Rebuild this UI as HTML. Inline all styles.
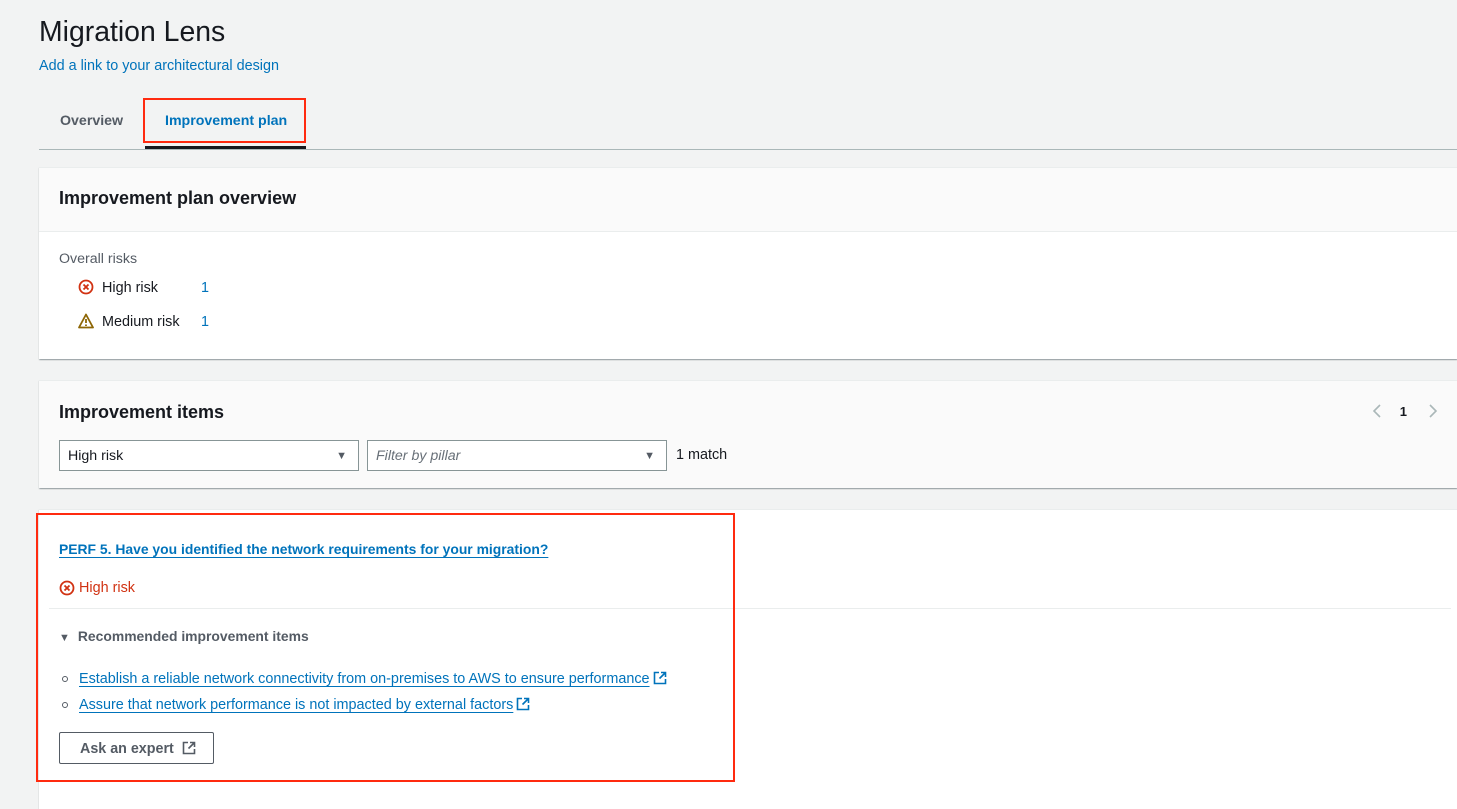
<!DOCTYPE html>
<html><head><meta charset="utf-8"><style>
*{box-sizing:border-box;margin:0;padding:0}
body{width:1457px;height:793px;overflow:hidden;background:#f2f3f3;font-family:"Liberation Sans",sans-serif;color:#16191f;position:relative}
.a{position:absolute}
.link{color:#0073bb}
.card{position:absolute;left:39px;right:0;box-shadow:0 1px 1px rgba(0,28,36,.3),1px 1px 1px rgba(0,28,36,.15);border-top:1px solid #eaeded}
.ul{text-decoration:underline;text-underline-offset:3px}
.ext{display:inline-block;vertical-align:-2px;margin-left:3px}
</style></head><body>
<div class="a" style="left:39px;top:16px;font-size:28.4px;">Migration Lens</div>
<div class="a link" style="left:39px;top:58px;font-size:14.4px;">Add a link to your architectural design</div>
<div class="a" style="left:60px;top:113px;font-size:14.2px;font-weight:bold;color:#545b64">Overview</div>
<div class="a" style="left:165px;top:113px;font-size:14.2px;font-weight:bold;color:#0073bb">Improvement plan</div>
<div class="a" style="left:143px;top:98px;width:163px;height:45px;border:2px solid #ff2a0f"></div>
<div class="a" style="left:145px;top:146px;width:161px;height:3px;background:#16191f"></div>
<div class="a" style="left:39px;top:149px;right:0;height:1px;background:#aab7b8"></div>

<div class="card" style="top:167px;height:192px;background:#fff">
 <div style="height:64px;background:#fafafa;border-bottom:1px solid #eaeded;padding:20px 20px;font-size:18px;font-weight:bold">Improvement plan overview</div>
 <div class="a" style="left:20px;top:83px;font-size:14.2px;color:#545b64">Overall risks</div>
 <svg class="a" style="left:39px;top:111px" width="16" height="16" viewBox="0 0 16 16"><circle cx="8" cy="8" r="6.5" fill="none" stroke="#d13212" stroke-width="1.8"/><path d="M5.5 5.5l5 5M10.5 5.5l-5 5" stroke="#d13212" stroke-width="1.8"/></svg>
 <div class="a" style="left:63px;top:112px;font-size:14.4px">High risk</div>
 <div class="a link" style="left:162px;top:112px;font-size:14.4px">1</div>
 <svg class="a" style="left:39px;top:145px" width="16" height="16" viewBox="0 0 16 16"><path d="M8 1.5L15 14.5H1z" fill="none" stroke="#8d6605" stroke-width="1.8" stroke-linejoin="round"/><path d="M8 6v4M8 11.5v1.5" stroke="#8d6605" stroke-width="1.8"/></svg>
 <div class="a" style="left:63px;top:146px;font-size:14.4px">Medium risk</div>
 <div class="a link" style="left:162px;top:146px;font-size:14.4px">1</div>
</div>

<div class="card" style="top:380px;height:108px;background:#fafafa">
 <div class="a" style="left:20px;top:21px;font-size:18px;font-weight:bold">Improvement items</div>
 <svg class="a" style="right:74px;top:22px" width="12" height="16" viewBox="0 0 12 16"><path d="M9 2L3 8l6 6" fill="none" stroke="#aab7b8" stroke-width="1.6"/></svg>
 <div class="a" style="right:50px;top:23px;font-size:13px;font-weight:bold">1</div>
 <svg class="a" style="right:18px;top:22px" width="12" height="16" viewBox="0 0 12 16"><path d="M3 2l6 6-6 6" fill="none" stroke="#aab7b8" stroke-width="1.6"/></svg>
 <div class="a" style="left:20px;top:59px;width:300px;height:31px;border:1px solid #879596;background:#fff;font-size:14.2px;padding:7px 8px">High risk<span class="a" style="right:11px;top:9px;font-size:11px;color:#545b64">▼</span></div>
 <div class="a" style="left:328px;top:59px;width:300px;height:31px;border:1px solid #879596;background:#fff;font-size:14.2px;padding:7px 8px;font-style:italic;color:#687078">Filter by pillar<span class="a" style="right:11px;top:9px;font-size:11px;color:#545b64;font-style:normal">▼</span></div>
 <div class="a" style="left:637px;top:66px;font-size:14.4px">1 match</div>
</div>

<div class="card" style="top:509px;height:300px;background:#fff">
 <div class="a link ul" style="left:20px;top:31px;font-size:13.9px;font-weight:bold">PERF 5. Have you identified the network requirements for your migration?</div>
 <svg class="a" style="left:20px;top:70px" width="16" height="16" viewBox="0 0 16 16"><circle cx="8" cy="8" r="6.5" fill="none" stroke="#d13212" stroke-width="1.8"/><path d="M5.5 5.5l5 5M10.5 5.5l-5 5" stroke="#d13212" stroke-width="1.8"/></svg>
 <div class="a" style="left:40px;top:70px;font-size:14.4px;color:#d13212">High risk</div>
 <div class="a" style="left:10px;right:6px;top:98px;height:1px;background:#eaeded"></div>
 <div class="a" style="left:20px;top:118px;font-size:13.9px;font-weight:bold;color:#545b64"><span style="font-size:11px;margin-right:8px">▼</span>Recommended improvement items</div>
 <div class="a" style="left:23px;top:166px;width:6px;height:6px;border:1px solid #545b64;border-radius:50%"></div>
 <div class="a link" style="left:40px;top:161px;font-size:14.4px;white-space:nowrap"><span class="ul">Establish a reliable network connectivity from on-premises to AWS to ensure performance</span><svg class="ext" width="14" height="14" viewBox="0 0 14 14"><path d="M6 1.5H1.5v11h11V8M8 1.5h4.5V6M12.5 1.5L6.5 7.5" fill="none" stroke="#0073bb" stroke-width="1.6"/></svg></div>
 <div class="a" style="left:23px;top:192px;width:6px;height:6px;border:1px solid #545b64;border-radius:50%"></div>
 <div class="a link" style="left:40px;top:187px;font-size:14.4px;white-space:nowrap"><span class="ul">Assure that network performance is not impacted by external factors</span><svg class="ext" width="14" height="14" viewBox="0 0 14 14"><path d="M6 1.5H1.5v11h11V8M8 1.5h4.5V6M12.5 1.5L6.5 7.5" fill="none" stroke="#0073bb" stroke-width="1.6"/></svg></div>
 <div class="a" style="left:20px;top:222px;width:155px;height:32px;border:1px solid #545b64;border-radius:2px;font-size:14.3px;font-weight:bold;color:#545b64;padding:8px 0 0 20px;white-space:nowrap">Ask an expert<svg class="ext" style="margin-left:8px" width="14" height="14" viewBox="0 0 14 14"><path d="M6 1.5H1.5v11h11V8M8 1.5h4.5V6M12.5 1.5L6.5 7.5" fill="none" stroke="#545b64" stroke-width="1.6"/></svg></div>
</div>
<div class="a" style="left:36px;top:513px;width:699px;height:269px;border:2px solid #ff2a0f"></div>
</body></html>
